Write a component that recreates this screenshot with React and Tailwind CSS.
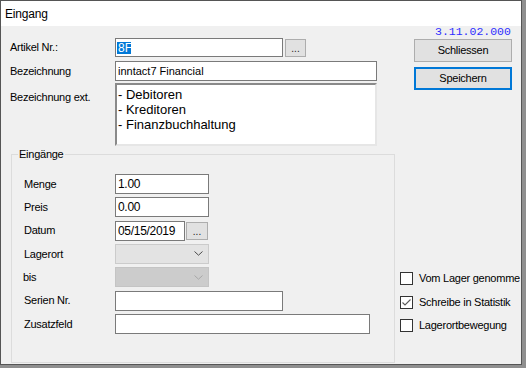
import React from "react";

const font = { fontFamily: '"Liberation Sans", Arial, sans-serif' };

const Input = ({ className = "", children }) => (
  <div
    className={`h-[20px] border border-[#7a7a7a] bg-white text-[11px] leading-[18px] pl-[2px] text-black overflow-hidden whitespace-nowrap ${className}`}
  >
    {children}
  </div>
);

const DotsButton = ({ className = "" }) => (
  <div
    className={`flex items-end justify-center border border-[#adadad] bg-[#e1e1e1] text-[10px] leading-[12px] pb-[1px] text-[#222] ${className}`}
  >
    ...
  </div>
);

const Chevron = ({ color }) => (
  <svg width="9" height="5" viewBox="0 0 9 5" className="mr-[5px]">
    <polyline points="0.5,0.5 4.5,4.2 8.5,0.5" fill="none" stroke={color} strokeWidth="1" />
  </svg>
);

const Combo = ({ disabled }) => (
  <div
    className={`h-[20px] w-[94px] border flex items-center justify-end ${
      disabled ? "bg-[#cccccc] border-[#c4c4c4]" : "bg-[#e3e3e3] border-[#cbcbcb]"
    }`}
  >
    <Chevron color={disabled ? "#a8a8a8" : "#4a4a4a"} />
  </div>
);

const Check = ({ checked, label }) => (
  <div className="flex items-center h-[13px] w-[120px] overflow-hidden whitespace-nowrap">
    <div className="w-[13px] h-[13px] shrink-0 border border-[#333333] bg-white flex items-center justify-center">
      {checked && (
        <svg width="11" height="11" viewBox="0 0 11 11">
          <polyline points="1.5,5.5 4,8 9.5,2.5" fill="none" stroke="#5a5a5a" strokeWidth="1.1" />
        </svg>
      )}
    </div>
    <span className="ml-[6px] text-[11px] tracking-[-0.25px] text-black">{label}</span>
  </div>
);

const GroupRow = ({ label, children, labelClass = "" }) => (
  <div className="flex items-center h-[20px]">
    <div className={`w-[91px] shrink-0 text-[11px] tracking-[-0.25px] ${labelClass}`}>{label}</div>
    {children}
  </div>
);

export default function App() {
  return (
    <div className="w-[526px] h-[368px] bg-[#8f8f8f] overflow-hidden" style={font}>
      <div className="w-[522px] h-[365px] border border-[#555555] bg-[#f0f0f0] flex flex-col overflow-hidden">
        {/* title bar */}
        <div className="h-[25px] shrink-0 bg-white flex items-center pl-[4px] text-[12px] tracking-[-0.2px] text-black">
          Eingang
        </div>

        <div className="flex flex-1">
          {/* left column */}
          <div className="w-[394px] shrink-0 pl-[9px] pt-[12px] flex flex-col">
            <div className="flex items-center h-[19px]">
              <div className="w-[105px] shrink-0 text-[11px] tracking-[-0.25px]">Artikel Nr.:</div>
              <div className="h-[19px] w-[168px] border border-[#7a7a7a] bg-white flex items-center pl-[1px]">
                <span className="bg-[#0078d7] text-white text-[12px] leading-[12px] px-[1px] w-[14px]">8F</span>
              </div>
              <DotsButton className="ml-[2px] w-[21px] h-[18px]" />
            </div>

            <div className="flex items-center mt-[4px]">
              <div className="w-[105px] shrink-0 text-[11px] tracking-[-0.25px]">Bezeichnung</div>
              <Input className="w-[262px]">inntact7 Financial</Input>
            </div>

            <div className="flex items-start mt-[2px]">
              <div className="w-[105px] shrink-0 pt-[6px] text-[11px] tracking-[-0.25px]">Bezeichnung ext.</div>
              <div className="w-[262px] h-[63px] bg-white border-2 border-t-[#8a8a8a] border-l-[#8a8a8a] border-r-[#e6e6e6] border-b-[#e6e6e6] pl-[1px] pt-[2px] text-[13px] leading-[15px]">
                <div>- Debitoren</div>
                <div>- Kreditoren</div>
                <div>- Finanzbuchhaltung</div>
              </div>
            </div>

            {/* Eingänge group */}
            <div className="relative ml-[1px] mt-[8px] w-[384px] h-[209px] border border-[#dcdcdc] pl-[12px] pt-[19px] flex flex-col gap-y-[3.33px]">
              <div className="absolute top-[-7px] left-[6px] px-[1px] bg-[#f0f0f0] text-[11px] leading-[13px] tracking-[-0.25px]">
                Eingänge
              </div>
              <GroupRow label="Menge">
                <Input className="w-[94px] text-[12px] tracking-[-0.3px]">1.00</Input>
              </GroupRow>
              <GroupRow label="Preis">
                <Input className="w-[94px] text-[12px] tracking-[-0.3px]">0.00</Input>
              </GroupRow>
              <GroupRow label="Datum">
                <Input className="w-[70px] text-[12px] tracking-[-0.3px]">05/15/2019</Input>
                <DotsButton className="ml-[1px] w-[22px] h-[18px]" />
              </GroupRow>
              <GroupRow label="Lagerort">
                <Combo />
              </GroupRow>
              <GroupRow label="bis" labelClass="-ml-[1px] mr-[1px]">
                <Combo disabled />
              </GroupRow>
              <GroupRow label="Serien Nr.">
                <Input className="w-[168px]" />
              </GroupRow>
              <GroupRow label="Zusatzfeld">
                <Input className="w-[255px]" />
              </GroupRow>
            </div>
          </div>

          {/* right column */}
          <div className="flex-1 flex flex-col pb-[32px] overflow-hidden">
            <div
              className="ml-[40px] text-[11.5px] leading-[12px] text-[#2e2eff]"
              style={{ fontFamily: '"Liberation Mono", "Courier New", monospace' }}
            >
              3.11.02.000
            </div>
            <div className="ml-[19px] mt-[1px] w-[98px] h-[23px] border border-[#adadad] bg-[#e1e1e1] flex items-center justify-center text-[11px] tracking-[-0.25px]">
              Schliessen
            </div>
            <div className="ml-[19px] mt-[5px] w-[98px] h-[23px] border-2 border-[#0078d7] bg-[#e1e1e1] flex items-center justify-center text-[11px] tracking-[-0.25px]">
              Speichern
            </div>
            <div className="mt-auto ml-[5px] flex flex-col gap-y-[10.5px]">
              <Check label="Vom Lager genommen" />
              <Check checked label="Schreibe in Statistik" />
              <Check label="Lagerortbewegung" />
            </div>
          </div>
        </div>
      </div>
    </div>
  );
}
